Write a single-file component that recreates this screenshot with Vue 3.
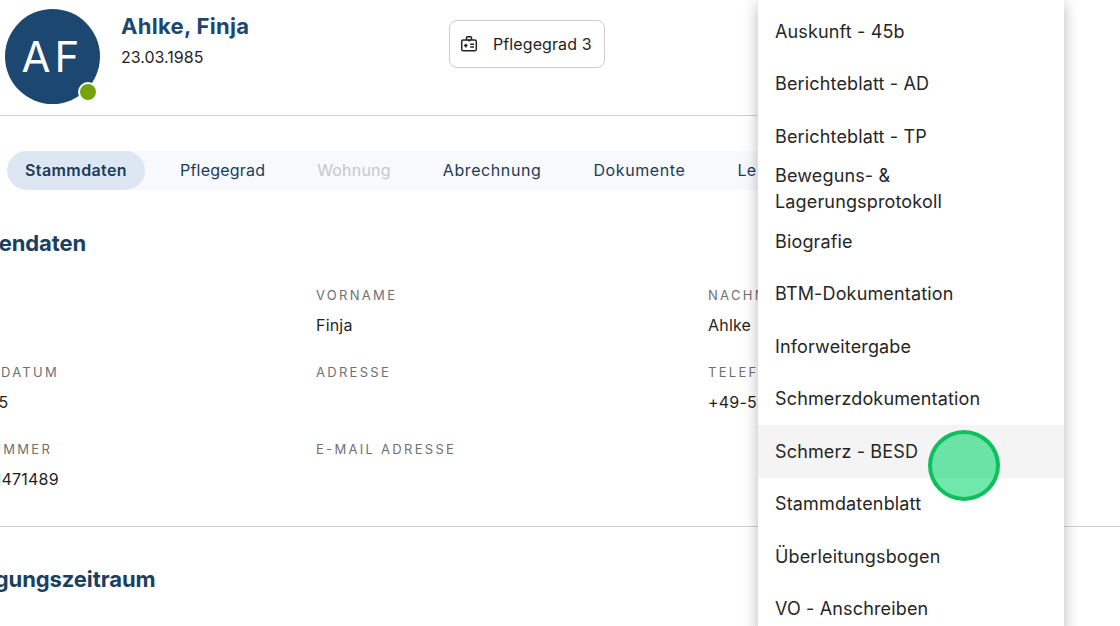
<script setup>
const tabs = [
  { label: 'Stammdaten', active: true },
  { label: 'Pflegegrad' },
  { label: 'Wohnung', disabled: true },
  { label: 'Abrechnung', wide: true },
  { label: 'Dokumente', wide: true },
  { label: 'Leistungen' },
]
const fields = [
  { label: 'Anrede', value: '' },
  { label: 'Vorname', value: 'Finja' },
  { label: 'Nachname', value: 'Ahlke' },
  { label: 'Geburtsdatum', value: '23.03.1985' },
  { label: 'Adresse', value: '' },
  { label: 'Telefon', value: '+49-5371471' },
  { label: 'Aktennummer', value: 'A10211471471489' },
  { label: 'E-Mail Adresse', value: '' },
]
const menu = [
  'Auskunft - 45b', 'Berichteblatt - AD', 'Berichteblatt - TP',
  'Beweguns- & Lagerungsprotokoll', 'Biografie', 'BTM-Dokumentation',
  'Inforweitergabe', 'Schmerzdokumentation', 'Schmerz - BESD',
  'Stammdatenblatt', 'Überleitungsbogen', 'VO - Anschreiben',
]
</script>

<template>
  <div class="page">
    <header class="head">
      <div class="avatar">AF<span class="status"></span></div>
      <div class="who">
        <h1>Ahlke, Finja</h1>
        <p>23.03.1985</p>
      </div>
      <button class="care">
        <svg width="18" height="16" viewBox="0 0 18 16" fill="none" stroke="#222" stroke-width="1.5">
          <rect x="1.7" y="4" width="14.6" height="10.8" rx="1.6" />
          <path d="M6.5 4V1.6a.8.8 0 0 1 .8-.8h3.4a.8.8 0 0 1 .8.8V4" />
          <path d="M7.5 4.5h3" />
          <path d="M4 9.6h3.6M5.8 7.8v3.6M10.2 8.2h3.8M10.2 11h3.8" />
        </svg>
        <span>Pflegegrad 3</span>
      </button>
    </header>

    <nav class="tabs">
      <span v-for="t in tabs" :key="t.label" class="tab" :class="{ active: t.active, disabled: t.disabled, wide: t.wide }">{{ t.label }}</span>
    </nav>

    <section class="sec">
      <h2>Patientendaten</h2>
      <div class="grid">
        <div v-for="f in fields" :key="f.label" class="field">
          <div class="lab">{{ f.label }}</div>
          <div class="val">{{ f.value }}</div>
        </div>
      </div>
    </section>

    <section class="sec next">
      <h2>Versorgungszeitraum</h2>
    </section>

    <ul class="menu">
      <li v-for="m in menu" :key="m" :class="{ hover: m === 'Schmerz - BESD' }">{{ m }}</li>
    </ul>
    <div class="cursor"></div>
  </div>
</template>

<style>
html, body { margin: 0; background: #fff; }
</style>

<style scoped>
.page {
  position: relative;
  width: 1120px;
  height: 626px;
  overflow: hidden;
  background: #fff;
  font-family: Inter, "Liberation Sans", sans-serif;
  color: #1f1f1f;
}
.head {
  display: flex;
  align-items: flex-start;
  height: 106px;
  margin-right: 363px;
  padding: 9px 0 0 5px;
  border-bottom: 1px solid #cfcfcf;
}
.avatar {
  position: relative;
  flex: none;
  width: 95px;
  height: 95px;
  border-radius: 50%;
  background: #1b4770;
  color: #fff;
  font-size: 42px;
  line-height: 95px;
  letter-spacing: 4px;
  text-align: center;
}
.status {
  position: absolute;
  right: 2px;
  bottom: 2px;
  width: 16px;
  height: 16px;
  border: 2px solid #fff;
  border-radius: 50%;
  background: #74a30e;
}
.who { margin-left: 21px; width: 328px; flex: none; }
.who h1 {
  margin: 3px 0 0;
  font-size: 22px;
  line-height: 28px;
  font-weight: 700;
  letter-spacing: .3px;
  color: #1b4770;
}
.who p {
  margin: 5px 0 0;
  font-size: 16px;
  line-height: 24px;
}
.care {
  display: flex;
  align-items: center;
  gap: 15px;
  width: 156px;
  height: 48px;
  margin-top: 11px;
  padding: 0 0 0 10px;
  box-sizing: border-box;
  background: #fff;
  border: 1px solid #cdcdcd;
  border-radius: 8px;
  font: inherit;
  font-size: 16px;
  letter-spacing: .1px;
  color: #1f1f1f;
}
.tabs {
  display: flex;
  gap: 16px;
  height: 39px;
  margin: 35px 363px 0 7px;
  background: #f7f9fc;
  border-radius: 20px 0 0 20px;
  overflow: hidden;
}
.tab {
  padding: 0 18px;
  font-size: 16px;
  line-height: 39px;
  letter-spacing: .2px;
  color: #1c3b57;
  white-space: nowrap;
}
.tab.active {
  margin-right: 1px;
  background: #dce7f3;
  border-radius: 20px;
  font-weight: 600;
  letter-spacing: .4px;
}
.tab.wide { letter-spacing: .6px; }
.tab.disabled { color: #c4c8cc; }
.sec { margin-left: -76px; }
.sec h2 {
  margin: 40px 0 0;
  font-size: 22px;
  line-height: 26px;
  font-weight: 700;
  letter-spacing: -.1px;
  color: #1b3f60;
}
.grid {
  display: grid;
  grid-template-columns: repeat(3, 392px);
  row-gap: 26px;
  margin-top: 30px;
  padding-bottom: 35px;
  border-bottom: 1px solid #cfcfcf;
}
.lab {
  font-size: 13px;
  line-height: 18px;
  letter-spacing: 2.3px;
  text-transform: uppercase;
  color: #707070;
}
.val {
  height: 24px;
  margin-top: 9px;
  font-size: 16px;
  line-height: 24px;
  letter-spacing: .2px;
  white-space: nowrap;
}
.next h2 { margin-top: 39px; }
.menu {
  position: absolute;
  top: 0;
  left: 758px;
  width: 306px;
  margin: 0;
  padding: 5px 0 0;
  list-style: none;
  background: #fff;
  box-shadow: 0 4px 14px rgba(0, 0, 0, .28);
}
.menu li {
  display: flex;
  align-items: center;
  box-sizing: border-box;
  height: 52.5px;
  padding: 1px 17px 0;
  font-size: 18px;
  line-height: 26px;
  letter-spacing: .15px;
  color: #262626;
}
.menu li.hover { background: #f4f4f4; }
.cursor {
  position: absolute;
  left: 928px;
  top: 430px;
  width: 72px;
  height: 71px;
  box-sizing: border-box;
  border: 4px solid #0cc05c;
  border-radius: 50%;
  background: rgba(10, 215, 110, .58);
}
</style>
